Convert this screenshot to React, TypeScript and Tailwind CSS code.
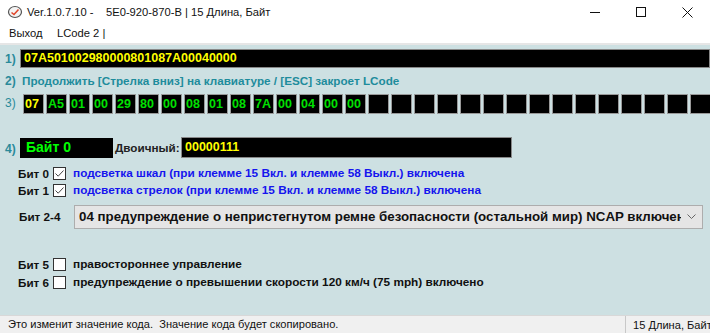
import { JSX } from 'react'

const BYTES = ['07', 'A5', '01', '00', '29', '80', '00', '08', '01', '08', '7A', '00', '04', '00', '00']
const TOTAL_CELLS = 30

const SANS = { fontFamily: '"Liberation Sans", Arial, sans-serif' }

function Check({ checked }: { checked: boolean }): JSX.Element {
  return (
    <span className="flex h-[13px] w-[13px] shrink-0 items-center justify-center border border-[#333] bg-white">
      {checked && (
        <svg width="11" height="11" viewBox="0 0 11 11">
          <path d="M1.5 5.5 L4.2 8.2 L9.5 2.5" fill="none" stroke="#444" strokeWidth="1" />
        </svg>
      )}
    </span>
  )
}

function BitRow({
  label,
  checked,
  text,
  blue
}: {
  label: string
  checked: boolean
  text: string
  blue: boolean
}): JSX.Element {
  return (
    <div className="flex h-[17px] items-center">
      <span className="w-[35px] text-[11.7px] font-bold text-[#111]">{label}</span>
      <Check checked={checked} />
      <span className={`ml-[7px] text-[11.8px] font-bold ${blue ? 'text-[#1515ee]' : 'text-[#111]'}`}>
        {text}
      </span>
    </div>
  )
}

export default function App(): JSX.Element {
  const cells = Array.from({ length: TOTAL_CELLS }, (_, i) => BYTES[i] ?? '')

  return (
    <div className="flex h-[333px] w-[710px] flex-col overflow-hidden bg-white" style={SANS}>
      {/* title bar */}
      <div className="flex h-[24px] items-center bg-white">
        <div className="ml-[6px] flex h-[17px] w-[17px] items-center justify-center">
          <svg width="16" height="16" viewBox="0 0 16 16">
            <ellipse cx="8" cy="8" rx="6.5" ry="5.5" fill="#f4f4f4" stroke="#555" strokeWidth="1.2" />
            <path d="M4.5 8.5 L7 10.5 L11.5 5.5" fill="none" stroke="#e0452a" strokeWidth="1.6" />
          </svg>
        </div>
        <span className="ml-[4px] text-[11.2px] text-[#111]">
          Ver.1.0.7.10 -&nbsp;&nbsp;&nbsp; 5E0-920-870-B | 15 Длина, Байт
        </span>
        <div className="ml-auto flex items-center">
          <div className="flex w-[46px] items-center justify-center">
            <div className="h-px w-[10px] bg-[#111]" />
          </div>
          <div className="flex w-[46px] items-center justify-center">
            <div className="h-[10px] w-[10px] border border-[#111]" />
          </div>
          <div className="flex w-[46px] items-center justify-center">
            <svg width="11" height="11" viewBox="0 0 11 11">
              <path d="M0.5 0.5 L10.5 10.5 M10.5 0.5 L0.5 10.5" stroke="#111" strokeWidth="1" />
            </svg>
          </div>
        </div>
      </div>

      {/* menu */}
      <div className="flex h-[19px] items-center bg-white pl-[9px] text-[11.2px] text-[#111]">
        <span className="w-[48px]">Выход</span>
        <span>LCode 2 |</span>
      </div>
      <div className="h-[2px] bg-[#e6e6e6]" />

      {/* main panel */}
      <div className="flex flex-1 flex-col bg-[#cde0e2] pt-[4px]">
        {/* row 1 */}
        <div className="flex h-[19px] items-center">
          <span className="w-[20px] pl-[5px] text-[12px] font-bold text-[#2a8a9a]">1)</span>
          <div className="flex h-[19px] flex-1 items-center border border-[#888] bg-black pl-[3px] text-[12.5px] font-bold text-[#ffff00]">
            07A501002980000801087A00040000
          </div>
        </div>

        {/* row 2 */}
        <div className="mt-[4px] flex h-[18px] items-center">
          <span className="w-[22px] pl-[5px] text-[12px] font-bold text-[#2a8a9a]">2)</span>
          <span className="text-[11.7px] font-bold text-[#1e8c9c]">
            Продолжить [Стрелка вниз] на клавиатуре / [ESC] закроет LCode
          </span>
        </div>

        {/* row 3 */}
        <div className="mt-[4px] flex h-[20px] items-center">
          <span className="w-[23px] self-start pl-[5px] text-[12px] text-[#2a8a9a]">3)</span>
          <div className="flex gap-[2px] overflow-hidden">
            {cells.map((b, i) => (
              <div
                key={i}
                className={`flex h-[20px] w-[21px] shrink-0 items-center border border-[#999] bg-black pl-[1px] text-[12.5px] font-bold ${
                  i === 0 ? 'text-[#ffff00]' : 'text-[#00e000]'
                }`}
              >
                {b}
              </div>
            ))}
          </div>
        </div>

        {/* row 4 */}
        <div className="mt-[23px] flex h-[21px] items-center">
          <span className="w-[20px] self-end pl-[5px] text-[12px] font-bold text-[#2a8a9a]">4)</span>
          <div className="flex h-[20px] w-[93px] items-center bg-black pl-[6px] text-[14px] font-bold text-[#00ff00]">
            Байт 0
          </div>
          <span className="ml-[2px] w-[66px] text-[11.7px] font-bold text-[#222]">Двоичный:</span>
          <div className="flex h-[21px] w-[331px] items-center border border-[#888] bg-black pl-[3px] text-[12.5px] font-bold text-[#ffff00]">
            00000111
          </div>
        </div>

        {/* bits 0-1 */}
        <div className="mt-[7px] flex flex-col pl-[18px]">
          <BitRow
            label="Бит 0"
            checked
            blue
            text="подсветка шкал (при клемме 15 Вкл. и клемме 58 Выкл.) включена"
          />
          <BitRow
            label="Бит 1"
            checked
            blue
            text="подсветка стрелок (при клемме 15 Вкл. и клемме 58 Выкл.) включена"
          />
        </div>

        {/* bit 2-4 */}
        <div className="mt-[6px] flex h-[24px] items-center pl-[19px]">
          <span className="w-[55px] self-start pt-[3px] text-[11.7px] font-bold text-[#111]">Бит 2-4</span>
          <div className="flex h-[24px] w-[629px] items-center overflow-hidden border border-[#adadad] bg-[#e5e5e5] pl-[4px]">
            <span className="flex-1 overflow-hidden whitespace-nowrap text-[13.3px] font-bold text-[#111]">
              04 предупреждение о непристегнутом ремне безопасности (остальной мир) NCAP включено
            </span>
            <svg className="mx-[6px] shrink-0" width="9" height="6" viewBox="0 0 9 6">
              <path d="M0.5 0.5 L4.5 4.5 L8.5 0.5" fill="none" stroke="#666" strokeWidth="1" />
            </svg>
          </div>
        </div>

        {/* bits 5-6 */}
        <div className="mt-[27px] flex flex-col pl-[18px]">
          <BitRow label="Бит 5" checked={false} blue={false} text="правостороннее управление" />
          <div className="h-px" />
          <BitRow
            label="Бит 6"
            checked={false}
            blue={false}
            text="предупреждение о превышении скорости 120 км/ч (75 mph) включено"
          />
        </div>
      </div>

      {/* status bar */}
      <div className="flex h-[18px] items-center border-t border-[#d8d8d8] bg-[#f0f0f0] text-[11.1px] text-[#111]">
        <span className="flex-1 whitespace-nowrap pl-[8px]">
          Это изменит значение кода.&nbsp; Значение кода будет скопировано.
        </span>
        <span className="h-full w-[85px] whitespace-nowrap border-l border-[#c8c8c8] pl-[7px] leading-[18px]">
          15 Длина, Байт
        </span>
      </div>
    </div>
  )
}
